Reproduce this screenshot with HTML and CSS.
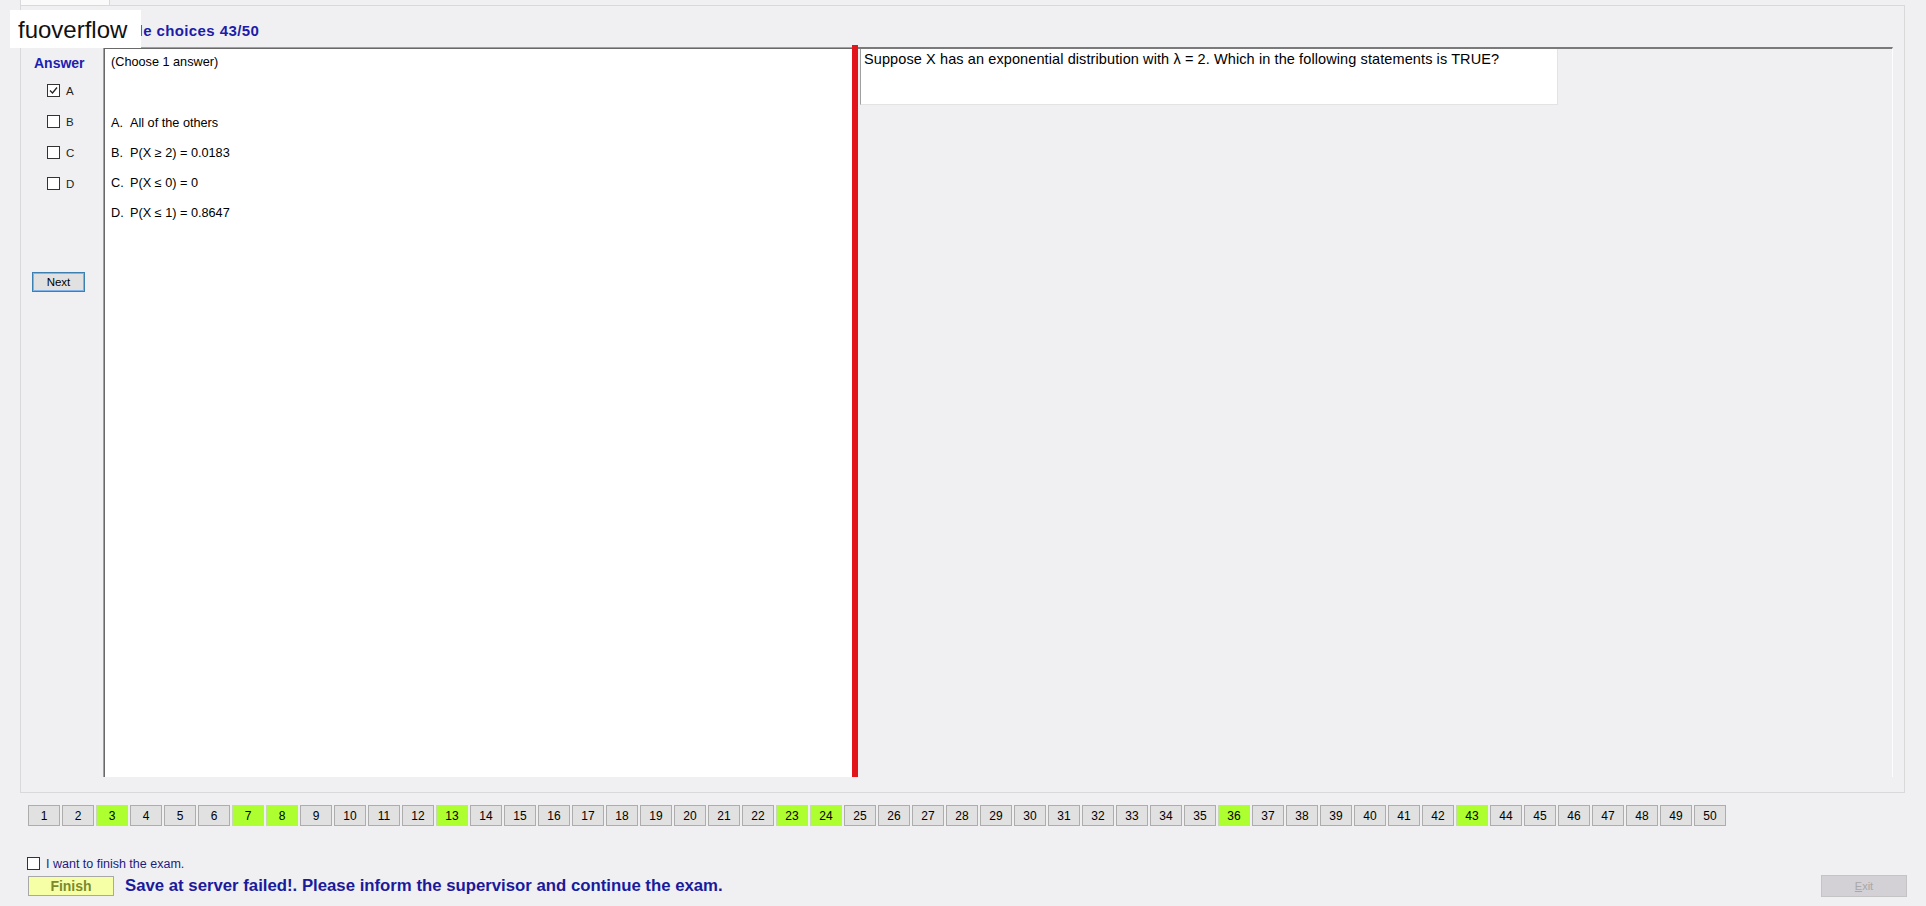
FILE: index.html
```html
<!DOCTYPE html>
<html lang="en">
<head>
  <meta charset="UTF-8">
  <title>Multiple choices 43/50</title>
  <link rel="stylesheet" href="styles.css">
</head>
<body>
  <div class="watermark">fuoverflow</div>

  <div class="tab-head"></div>
  <div class="tab-page">
    <!-- first letters sit under the watermark -->
    <div class="title"><span class="covered">Multip</span>le choices 43/50</div>

    <div class="main">
      <div class="answer-col">
        <div class="answer-label">Answer</div>
        <div class="cb-row"><span class="cb checked"><svg width="11" height="11" viewBox="0 0 11 11"><polyline points="2,5.5 4.5,8 9,2.5" fill="none" stroke="#222" stroke-width="1.3"/></svg></span>A</div>
        <div class="cb-row"><span class="cb"></span>B</div>
        <div class="cb-row"><span class="cb"></span>C</div>
        <div class="cb-row"><span class="cb"></span>D</div>
        <button class="next-btn">Next</button>
      </div>

      <div class="answer-box">
        <div class="choose">(Choose 1 answer)</div>
        <div class="options">
          <div class="opt"><span class="opt-key">A.</span>All of the others</div>
          <div class="opt"><span class="opt-key">B.</span>P(X &ge; 2) = 0.0183</div>
          <div class="opt"><span class="opt-key">C.</span>P(X &le; 0) = 0</div>
          <div class="opt"><span class="opt-key">D.</span>P(X &le; 1) = 0.8647</div>
        </div>
      </div>

      <div class="red-bar"></div>

      <div class="right-panel">
        <div class="question">Suppose X has an exponential distribution with &lambda; = 2. Which in the following statements is TRUE?</div>
      </div>
    </div>
  </div>

  <div class="qnav">
    <button class="qbtn">1</button>
    <button class="qbtn">2</button>
    <button class="qbtn done">3</button>
    <button class="qbtn">4</button>
    <button class="qbtn">5</button>
    <button class="qbtn">6</button>
    <button class="qbtn done">7</button>
    <button class="qbtn done">8</button>
    <button class="qbtn">9</button>
    <button class="qbtn">10</button>
    <button class="qbtn">11</button>
    <button class="qbtn">12</button>
    <button class="qbtn done">13</button>
    <button class="qbtn">14</button>
    <button class="qbtn">15</button>
    <button class="qbtn">16</button>
    <button class="qbtn">17</button>
    <button class="qbtn">18</button>
    <button class="qbtn">19</button>
    <button class="qbtn">20</button>
    <button class="qbtn">21</button>
    <button class="qbtn">22</button>
    <button class="qbtn done">23</button>
    <button class="qbtn done">24</button>
    <button class="qbtn">25</button>
    <button class="qbtn">26</button>
    <button class="qbtn">27</button>
    <button class="qbtn">28</button>
    <button class="qbtn">29</button>
    <button class="qbtn">30</button>
    <button class="qbtn">31</button>
    <button class="qbtn">32</button>
    <button class="qbtn">33</button>
    <button class="qbtn">34</button>
    <button class="qbtn">35</button>
    <button class="qbtn done">36</button>
    <button class="qbtn">37</button>
    <button class="qbtn">38</button>
    <button class="qbtn">39</button>
    <button class="qbtn">40</button>
    <button class="qbtn">41</button>
    <button class="qbtn">42</button>
    <button class="qbtn done">43</button>
    <button class="qbtn">44</button>
    <button class="qbtn">45</button>
    <button class="qbtn">46</button>
    <button class="qbtn">47</button>
    <button class="qbtn">48</button>
    <button class="qbtn">49</button>
    <button class="qbtn">50</button>
  </div>

  <div class="finish-check"><span class="cb"></span>I want to finish the exam.</div>

  <div class="bottom-bar">
    <button class="finish-btn">Finish</button>
    <span class="status">Save at server failed!. Please inform the supervisor and continue the exam.</span>
    <button class="exit-btn" disabled><u>E</u>xit</button>
  </div>
</body>
</html>
```

FILE: styles.css
```css
* {
  box-sizing: border-box;
}

body {
  margin: 0;
  width: 1926px;
  height: 906px;
  overflow: hidden;
  position: relative;
  background-color: #f0f0f2;
  font-family: "Liberation Sans", Arial, sans-serif;
  color: #000;
}

button {
  font-family: "Liberation Sans", Arial, sans-serif;
  padding: 0;
}

/* watermark over the title */
.watermark {
  position: absolute;
  left: 10px;
  top: 10px;
  width: 131px;
  height: 38px;
  padding: 6px 0 0 8px;
  background: #fff;
  font-size: 24px;
  line-height: 27px;
  color: #111;
}

.tab-head {
  margin-left: 20px;
  width: 90px;
  height: 5px;
  background: #fafafa;
  border-left: 1px solid #d9d9d9;
  border-right: 1px solid #d9d9d9;
}

.tab-page {
  margin-left: 20px;
  width: 1885px;
  height: 788px;
  border: 1px solid #d9d9d9;
}

.title {
  height: 41px;
  padding: 16px 0 0 71px;
  font-size: 15px;
  line-height: 17px;
  font-weight: bold;
  color: #1c1ca8;
  letter-spacing: 0.4px;
}

.title .covered {
  visibility: hidden;
}

.main {
  display: flex;
  height: 730px;
}

.answer-col {
  width: 82px;
  padding-top: 8px;
}

.answer-label {
  padding-left: 13px;
  font-size: 14px;
  line-height: 16px;
  font-weight: bold;
  color: #2020b0;
  margin-bottom: 4px;
}

.cb-row {
  height: 31px;
  display: flex;
  align-items: center;
  gap: 6px;
  padding-left: 26px;
  font-size: 11.5px;
  color: #222;
}

.cb {
  display: inline-flex;
  align-items: center;
  justify-content: center;
  width: 13px;
  height: 13px;
  border: 1px solid #333;
  background: #fff;
}

.next-btn {
  display: block;
  margin: 73px 0 0 11px;
  width: 53px;
  height: 20px;
  background: #e1e1e1;
  border: 1px solid #3c7fb1;
  box-shadow: inset 0 0 0 1px #7eb4ea;
  font-size: 11.5px;
  color: #000;
}

.answer-box {
  width: 749px;
  background: #fff;
  border-top: 1px solid #a0a0a0;
  border-left: 1px solid #a0a0a0;
  box-shadow: inset 1px 1px 0 #696969;
  padding: 7px 0 0 7px;
  font-size: 12.7px;
}

.choose {
  line-height: 15px;
}

.options {
  margin-top: 38px;
}

.opt {
  height: 30px;
  line-height: 30px;
}

.opt-key {
  display: inline-block;
  width: 19px;
}

.red-bar {
  width: 6px;
  margin-top: -2px;
  background: #e2141c;
}

.right-panel {
  width: 1035px;
  border-top: 2px solid #7a7a7a;
  border-right: 1px solid #fdfdfd;
  padding-left: 2px;
}

.question {
  width: 698px;
  height: 56px;
  background: #fff;
  border-left: 1px solid #a0a0a0;
  border-bottom: 1px solid #e3e3e3;
  border-right: 1px solid #e3e3e3;
  padding: 2px 0 0 3px;
  font-size: 14.5px;
  letter-spacing: 0.1px;
  line-height: 16px;
}

.qnav {
  display: flex;
  gap: 2px;
  margin-top: 12px;
  padding-left: 28px;
}

.qbtn {
  width: 32px;
  height: 21px;
  background: #e1e1e1;
  border: 1px solid #adadad;
  font-size: 12px;
  color: #000;
}

.qbtn.done {
  background: #adff2f;
  border-color: #c6d9b0;
}

.finish-check {
  display: flex;
  align-items: center;
  gap: 6px;
  margin-top: 31px;
  padding-left: 27px;
  height: 13px;
  font-size: 12.5px;
  color: #1c1c80;
}

.bottom-bar {
  display: flex;
  align-items: center;
  height: 22px;
  margin-top: 5px;
  padding: 0 19px 0 28px;
}

.finish-btn {
  width: 86px;
  height: 20px;
  background: #f6ffa6;
  border: 1px solid #a8a8a8;
  font-size: 14px;
  font-weight: bold;
  color: #7c8a2c;
}

.status {
  margin-left: 11px;
  font-size: 16.75px;
  font-weight: bold;
  color: #1a1a9c;
}

.exit-btn {
  margin-left: auto;
  width: 86px;
  height: 22px;
  background: #d3d0d6;
  border: 1px solid #c4c4c4;
  font-size: 11px;
  color: #a8a8a8;
}
```
